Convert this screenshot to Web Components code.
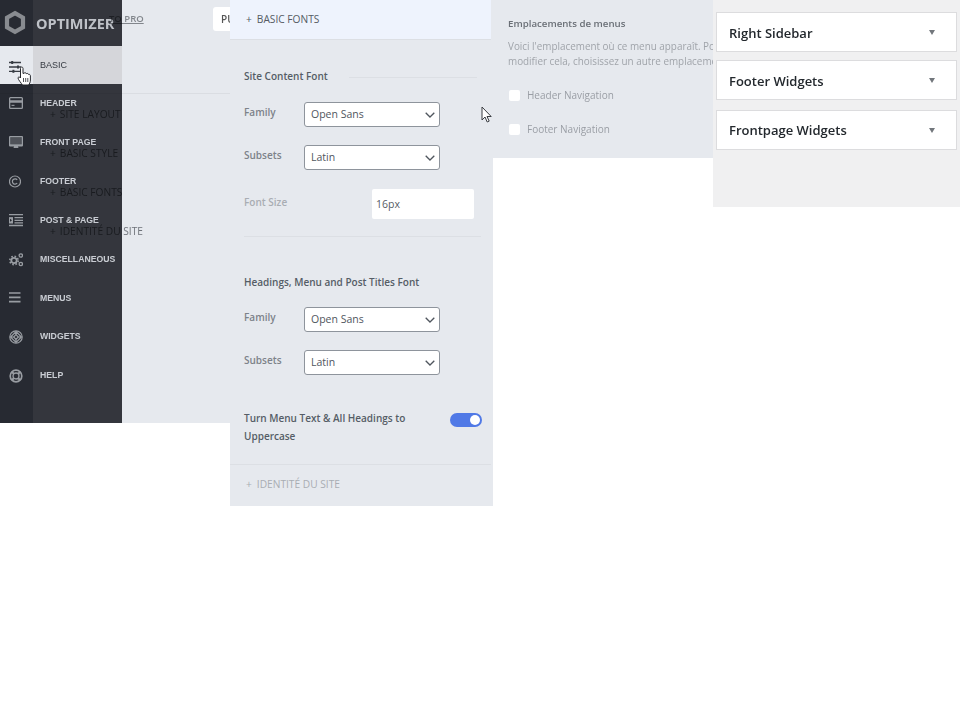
<!DOCTYPE html>
<html>
<head>
<meta charset="utf-8">
<style>
  html, body { margin: 0; background: #fff; }
  body { font-family: "Open Sans", sans-serif; }
  #page { display: flex; align-items: flex-start; width: 960px; height: 720px; overflow: hidden; position: relative; }
</style>
</head>
<body>
<div id="page">
  <customizer-home></customizer-home>
  <fonts-panel></fonts-panel>
  <menus-panel></menus-panel>
  <widgets-panel>
    <widget-row style="padding-top:1px">Right Sidebar</widget-row>
    <widget-row style="margin-top:8px;padding-top:1px">Footer Widgets</widget-row>
    <widget-row style="margin-top:10px">Frontpage Widgets</widget-row>
  </widgets-panel>
</div>
<script>
// small helper, every element just stamps its html into an open shadow root
class BaseElement extends HTMLElement {
    connectedCallback() {
        if (this.shadowRoot) return
        this.attachShadow({ mode: 'open' }).innerHTML = this.template()
    }
}

const navIcons = {
    basic: '<g stroke="currentColor" stroke-width="1.3" fill="currentColor"><path d="M0 3.500h12M0 8h12M0 12.300h12" fill="none"/><rect x="2.200" y="2" width="2" height="3" stroke="none"/><rect x="8" y="6.500" width="2" height="3" stroke="none"/><rect x="3.400" y="10.800" width="2" height="3" stroke="none"/></g>',
    header: '<path fill-rule="evenodd" fill="currentColor" d="M1.500 0h11A1.500 1.500 0 0 1 14 1.500v9a1.500 1.500 0 0 1-1.500 1.500h-11A1.500 1.500 0 0 1 0 10.500v-9A1.500 1.500 0 0 1 1.500 0zM1.300 1.300V3.200h11.400V1.300zM1.300 5.800v4.900h11.400V5.800z"/><rect x="2.500" y="7.800" width="3" height="1.100" fill="currentColor"/>',
    front: '<path fill="currentColor" fill-rule="evenodd" d="M1 0h12a1 1 0 0 1 1 1v8.500a1 1 0 0 1-1 1H9l.5 1.500h-5l.5-1.500H1a1 1 0 0 1-1-1V1a1 1 0 0 1 1-1zM1.300 1.300v6.900h11.400V1.300z"/><rect x="1.300" y="1.300" width="11.400" height="6.900" fill="currentColor" opacity=".35"/>',
    footer: '<circle cx="6" cy="6.500" r="5.500" fill="none" stroke="currentColor" stroke-width="1.200"/><path d="M8.200 4.800A2.700 2.700 0 1 0 8.200 8.200" fill="none" stroke="currentColor" stroke-width="1.200"/>',
    post: '<path d="M0 .7h14M5.500 3.700H14M5.500 6.300H14M5.500 8.900H14M0 11.500h14" stroke="currentColor" stroke-width="1.300" fill="none"/><path d="M0 3.100h4v6.400H0z" fill="currentColor"/><path d="M1 4.800l2 1.500L1 7.800z" fill="#272a31"/>',
    misc: '<g fill="none" stroke="currentColor"><circle cx="5" cy="7.500" r="2.700" stroke-width="1.800"/><circle cx="5" cy="7.500" r="4.200" stroke-width="1.600" stroke-dasharray="1.650 1.650"/><circle cx="11.800" cy="2.500" r="1.700" stroke-width="1.300"/><circle cx="11.800" cy="11" r="1.700" stroke-width="1.300"/></g>',
    menus: '<path d="M0 1h11.500M0 5.300h11.500M0 9.600h11.500" stroke="currentColor" stroke-width="1.700" fill="none"/>',
    widgets: '<g fill="none" stroke="currentColor" stroke-width="1.200"><circle cx="7" cy="7" r="6.200"/><path d="M7 1.500L12.500 7 7 12.500 1.500 7zM1.500 7h3.200M9.300 7h3.200M7 1.500v3.200M7 9.300v3.200"/><path d="M7 4.700L9.300 7 7 9.300 4.700 7z"/></g>',
    help: '<g fill="none" stroke="currentColor"><circle cx="7" cy="7" r="5.800" stroke-width="1.700"/><circle cx="7" cy="7" r="3" stroke-width="1.300"/><path d="M3 3l2 2M11 3L9 5M3 11l2-2M11 11L9 9" stroke-width="2"/></g>'
}

class NavItem extends BaseElement {
    template() {
        const icon = navIcons[this.getAttribute('icon')]
        const w = this.getAttribute('w') || 14
        return `
        <style>
            :host { display: flex; height: 38.85px; color: #dfe0e2; }
            .ico { width: 33px; display: block; background: #2b2e35; color: #a9abae; padding: 13px 0 0 9px; box-sizing: border-box; }
            .ico svg { display: block; }
            .lbl { flex: 1; background: #393b41; padding: 13px 0 0 7px; box-sizing: border-box; font: bold 8.700px/12px "Liberation Sans", Arial, sans-serif; }
            :host([active]) { color: #3d4148; }
            :host([active]) .ico { background: #ffffff; color: #3d4148; }
            :host([active]) .lbl { background: #ecebea; font-weight: normal; font-size: 9px; }
        </style>
        <div class="ico"><svg width="${w}" height="15" viewBox="0 0 ${w} 15">${icon}</svg></div>
        <div class="lbl"><slot></slot></div>
        `
    }
}
customElements.define('nav-item', NavItem)

class OptSidebar extends BaseElement {
    template() {
        return `
        <style>
            :host { display: block; position: absolute; left: 0; top: 0; width: 122px; height: 423px; background: #393b41; mix-blend-mode: multiply; overflow: hidden; }
            .logo { display: flex; height: 45.500px; }
            .mark { width: 33px; background: #2b2e35; display: flex; align-items: center; justify-content: center; padding-right: 3px; box-sizing: border-box; }
            .word { flex: 1; background: #393b41; font: bold 14.500px/46px "Open Sans", sans-serif; color: #d4d5d7; padding-left: 3px; padding-top: 1px; box-sizing: border-box; }
            .col { position: absolute; left: 0; top: 390px; width: 33px; height: 40px; background: #2b2e35; }
        </style>
        <div class="logo">
            <div class="mark">
                <svg width="22" height="25" viewBox="0 0 22 25"><path d="M11 3.200L19 7.700V17.300L11 21.800L3 17.300V7.700Z" fill="none" stroke="#97989a" stroke-width="4.200"/></svg>
            </div>
            <div class="word">OPTIMIZER</div>
        </div>
        <slot></slot>
        <div class="col"></div>
        `
    }
}
customElements.define('opt-sidebar', OptSidebar)

class CustomizerHome extends BaseElement {
    template() {
        const rows = ['SITE LAYOUT', 'BASIC STYLE', 'BASIC FONTS', 'IDENTITÉ DU SITE']
        return `
        <style>
            :host { display: block; position: relative; flex: none; width: 230px; height: 423px; background: #e6e9ee; overflow: hidden; }
            .top { height: 93px; border-bottom: 1px solid #dadde2; box-sizing: content-box; position: relative; }
            .pro { position: absolute; left: 109px; top: 12px; font-size: 9.500px; line-height: 14px; color: #82868c; text-decoration: underline; font-weight: 600; }
            .pub { position: absolute; left: 213px; top: 7px; width: 17px; height: 24px; background: #fff; border-radius: 3px 0 0 3px; font: 600 10px/24px "Open Sans", sans-serif; color: #555; padding-left: 8px; box-sizing: border-box; overflow: hidden; white-space: nowrap; }
            .row { height: 39px; padding-left: 50px; display: flex; gap: 4px; font-size: 10.200px; line-height: 39px; color: #6f737a; white-space: nowrap; }
            .rows { margin-top: 1px; }
        </style>
        <div class="top"><span class="pro">TO PRO</span><span class="pub">PU</span></div>
        <div class="rows">${rows.map(r => `<div class="row"><span>+</span><span>${r}</span></div>`).join('')}</div>
        <opt-sidebar>
            <nav-item icon="basic" w="12" active>BASIC</nav-item>
            <nav-item icon="header">HEADER</nav-item>
            <nav-item icon="front">FRONT PAGE</nav-item>
            <nav-item icon="footer" w="12">FOOTER</nav-item>
            <nav-item icon="post">POST &amp; PAGE</nav-item>
            <nav-item icon="misc">MISCELLANEOUS</nav-item>
            <nav-item icon="menus" w="12">MENUS</nav-item>
            <nav-item icon="widgets">WIDGETS</nav-item>
            <nav-item icon="help">HELP</nav-item>
        </opt-sidebar>
        <svg style="position:absolute;left:17px;top:66px" width="15" height="20" viewBox="0 0 15 20">
            <path d="M4.500 1c1 0 1.500.7 1.500 1.500V7.500l1-.3c1-.8 2-.5 2.300.5 1-.6 1.900-.2 2.200.7 1-.3 1.900.3 1.900 1.300v4.300c0 2.500-1 4-2 5H5.500c-1-1.500-4.500-5.500-4.500-7 0-1 1.200-1.300 2-.5l.5.500V2.500c0-.8.400-1.500 1-1.500z" fill="#fff" stroke="#26282d" stroke-width="1"/>
            <path d="M6.500 12v4M8.700 12v4M10.800 12v4" stroke="#26282d" stroke-width=".8"/>
        </svg>
        `
    }
}
customElements.define('customizer-home', CustomizerHome)

class SelectField extends BaseElement {
    template() {
        return `
        <style>
            :host { display: flex; align-items: flex-start; height: 25px; font-size: 10px; }
            label { width: 60px; color: #7d8289; font-weight: 600; line-height: 14px; margin-top: 3px; flex: none; }
            .box { width: 136px; height: 25px; box-sizing: border-box; background: #fff; border: 1px solid #8e949c; border-radius: 3px; display: flex; align-items: center; justify-content: space-between; padding: 0 4px 1px 6px; color: #50565e; font-size: 10.500px; }
            .box svg { margin-top: 1px; }
        </style>
        <label>${this.getAttribute('label')}</label>
        <div class="box"><slot></slot>
            <svg width="10" height="6" viewBox="0 0 10 6"><path d="M.7.700L5 5l4.300-4.300" fill="none" stroke="#50565e" stroke-width="1.300"/></svg>
        </div>
        `
    }
}
customElements.define('select-field', SelectField)

class ToggleSwitch extends BaseElement {
    template() {
        return `
        <style>
            :host { display: block; width: 32px; height: 14px; background: #5079e6; border-radius: 7px; position: relative; flex: none; }
            .knob { position: absolute; right: 2px; top: 2px; width: 10px; height: 10px; border-radius: 50%; background: #fff; }
        </style>
        <div class="knob"></div>
        `
    }
}
customElements.define('toggle-switch', ToggleSwitch)

class FontsPanel extends BaseElement {
    template() {
        return `
        <style>
            :host { display: block; position: relative; flex: none; width: 263px; height: 506px; background: #e6e9ee; color: #555d66; font-size: 10px; }
            .head { width: 261px; height: 40px; box-sizing: border-box; background: #eef3fd; border-bottom: 1px solid #dcdfe4; padding-left: 16px; display: flex; gap: 5px; line-height: 39px; font-size: 10.200px; color: #555b63; }
            .body { padding: 0 12px 0 14px; }
            h4 { margin: 0; font-size: 10px; font-weight: 600; line-height: 16px; color: #555d66; }
            .titled { display: flex; align-items: center; margin-top: 28px; }
            .titled i { display: block; width: 128px; height: 1px; background: #dcdfe4; margin-left: 21px; margin-top: 2px; }
            select-field { margin-top: 18px; }
            select-field + select-field { margin-top: 18px; }
            .size { display: flex; height: 30px; margin-top: 19px; align-items: flex-start; color: #a9adb3; font-weight: 600; line-height: 14px; }
            .size span { width: 128px; margin-top: 6px; }
            .size div { width: 102px; height: 30px; box-sizing: border-box; background: #fff; border-radius: 2px; padding-left: 4px; line-height: 30px; font-size: 10.500px; color: #555d66; font-weight: 400; }
            .rule { height: 1px; width: 237px; background: #dcdfe4; margin-top: 17px; }
            .h2 { margin-top: 37px; }
            .h2 + select-field { margin-top: 17px; }
            .upper { display: flex; justify-content: space-between; margin: 34px -1px 0 0; line-height: 18px; font-weight: 600; color: #555d66; }
            .upper toggle-switch { margin-top: 4px; }
            .upper span { width: 180px; }
            .foot { position: absolute; left: 0; right: 2px; top: 464px; height: 42px; box-sizing: border-box; border-top: 1px solid #dcdfe4; padding-left: 16px; display: flex; gap: 5px; line-height: 39px; font-size: 10.200px; color: #a9adb3; }
        </style>
        <div class="head"><span>+</span><span>BASIC FONTS</span></div>
        <div class="body">
            <div class="titled"><h4>Site Content Font</h4><i></i></div>
            <select-field label="Family">Open Sans</select-field>
            <select-field label="Subsets">Latin</select-field>
            <div class="size"><span>Font Size</span><div>16px</div></div>
            <div class="rule"></div>
            <h4 class="h2">Headings, Menu and Post Titles Font</h4>
            <select-field label="Family">Open Sans</select-field>
            <select-field label="Subsets">Latin</select-field>
            <div class="upper"><span>Turn Menu Text &amp; All Headings to Uppercase</span><toggle-switch></toggle-switch></div>
        </div>
        <div class="foot"><span>+</span><span>IDENTITÉ DU SITE</span></div>
        <svg style="position:absolute;left:251px;top:106px" width="12" height="18" viewBox="0 0 12 18">
            <path d="M1 1v13l3-3 2.200 5 2-.900L6 10.500h4.200z" fill="#fff" stroke="#3a3d42" stroke-width="1"/>
        </svg>
        `
    }
}
customElements.define('fonts-panel', FontsPanel)

class MenusPanel extends BaseElement {
    template() {
        return `
        <style>
            :host { display: block; flex: none; width: 220px; height: 158px; background: #e6e9ee; overflow: hidden; box-sizing: border-box; padding: 16px 0 0 15px; font-size: 10px; color: #9a9ea5; white-space: nowrap; }
            h4 { margin: 0; font-size: 9.700px; font-weight: 600; line-height: 15px; color: #6a6f76; }
            p { margin: 8px 0 0; line-height: 15px; font-size: 9.900px; color: #a0a4aa; }
            .check { display: flex; align-items: center; gap: 7px; height: 14px; margin-top: 19px; padding-left: 1px; color: #9a9ea5; }
            .check + .check { margin-top: 20px; }
            .check i { display: block; width: 11px; height: 11px; background: #fff; border-radius: 2px; }
        </style>
        <h4>Emplacements de menus</h4>
        <p>Voici l'emplacement où ce menu apparaît. Pour<br>modifier cela, choisissez un autre emplacement</p>
        <div class="check"><i></i><span>Header Navigation</span></div>
        <div class="check"><i></i><span>Footer Navigation</span></div>
        `
    }
}
customElements.define('menus-panel', MenusPanel)

class WidgetsPanel extends BaseElement {
    template() {
        return `
        <style>
            :host { display: block; flex: none; width: 247px; height: 207px; box-sizing: border-box; background: #f0f0f1; padding: 12px 3px 0; }
        </style>
        <slot></slot>
        `
    }
}
customElements.define('widgets-panel', WidgetsPanel)

class WidgetRow extends BaseElement {
    template() {
        return `
        <style>
            :host { display: flex; align-items: center; justify-content: space-between; height: 40px; box-sizing: border-box; background: #fff; border: 1px solid #dcdcde; padding: 0 21px 0 12px; font: 600 13px "Open Sans", sans-serif; color: #23282d; }
            .arrow { width: 0; height: 0; border-left: 3.500px solid transparent; border-right: 3.500px solid transparent; border-top: 5px solid #72777c; }
        </style>
        <slot></slot><div class="arrow"></div>
        `
    }
}
customElements.define('widget-row', WidgetRow)
</script>
</body>
</html>
